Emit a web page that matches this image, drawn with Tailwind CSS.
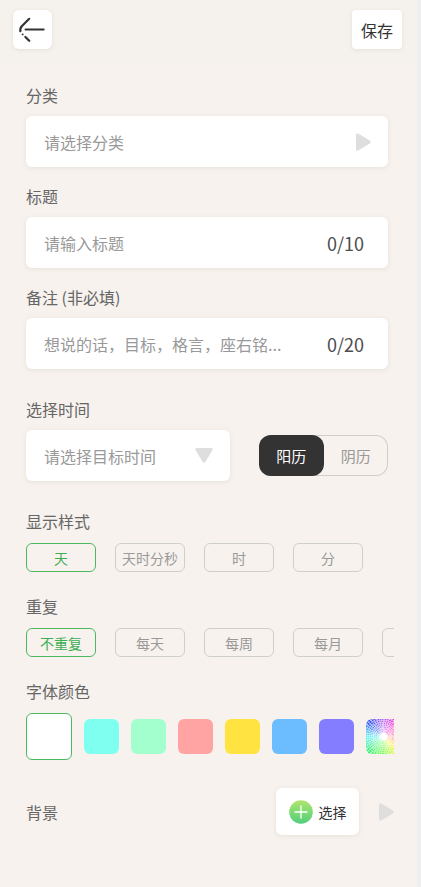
<!DOCTYPE html>
<html lang="zh-CN">
<head>
<meta charset="utf-8">
<meta name="viewport" content="width=device-width, initial-scale=1">
<title>新建目标</title>
<script src="https://cdn.jsdelivr.net/npm/@tailwindcss/browser@4"></script>
</head>
<body class="min-h-screen border-r-4 border-[#efefef] bg-[#f7f2ee] font-['Noto_Sans_CJK_SC',sans-serif] text-base leading-6 text-[#666666]">
<header class="flex items-center justify-between bg-[#f5f1ec] pt-[10px] pr-[15px] pb-4 pl-[13px]">
  <button type="button" aria-label="返回" class="flex size-[39px] items-center justify-center rounded-md bg-white shadow-[0_1px_4px_rgba(120,110,70,0.12)]">
    <svg class="size-[39px]" viewBox="0 0 39 39" fill="none" stroke="#333" stroke-linecap="round" stroke-linejoin="round">
      <path d="M16.2 8.8 9 16Q6.8 18.2 7.4 21.2" stroke-width="2.2"/>
      <path d="M12.5 19.5H30.7" stroke-width="1.9"/>
      <path d="M9.6 24.4h.1" stroke-width="1.9"/>
      <path d="m12.4 27 3.8 3.8" stroke-width="2.3"/>
    </svg>
  </button>
  <button type="submit" form="goal" class="h-[39px] rounded-sm bg-white px-[9px] text-[#333333] shadow-[0_1px_4px_rgba(120,110,70,0.12)]">保存</button>
</header>

<form id="goal" class="pt-[18px] pr-[23px] pb-10 pl-[26px]">
  <div class="mr-[6px] flex flex-col gap-[17px]">
    <div class="flex flex-col gap-[9px]">
      <label for="category">分类</label>
      <div class="flex h-[51px] items-center rounded-md bg-white pr-[17px] pl-[18px] shadow-[0_1px_5px_rgba(120,110,70,0.12)]">
        <select id="category" class="min-w-0 flex-1 appearance-none bg-transparent text-[#999999] outline-none"><option>请选择分类</option></select>
        <svg class="h-[18px] w-[15px]" viewBox="0 0 15 18" fill="#dedede" aria-hidden="true"><path d="M0 2Q0-.8 2.6.7L13.8 7.6Q15.6 9 13.8 10.4L2.6 17.3Q0 18.8 0 16Z"/></svg>
      </div>
    </div>
    <div class="flex flex-col gap-[9px]">
      <label for="title">标题</label>
      <div class="flex h-[51px] items-center gap-4 rounded-md bg-white pr-6 pl-[18px] shadow-[0_1px_5px_rgba(120,110,70,0.12)]">
        <input id="title" type="text" maxlength="10" placeholder="请输入标题" class="min-w-0 flex-1 bg-transparent text-[#333333] outline-none placeholder:text-[#999999]">
        <span class="text-lg text-[#4d4d4d]">0/10</span>
      </div>
    </div>
    <div class="flex flex-col gap-[9px]">
      <label for="note">备注 (非必填)</label>
      <div class="flex h-[51px] items-center gap-4 rounded-md bg-white pr-6 pl-[18px] shadow-[0_1px_5px_rgba(120,110,70,0.12)]">
        <input id="note" type="text" maxlength="20" placeholder="想说的话，目标，格言，座右铭..." class="min-w-0 flex-1 bg-transparent text-[#333333] outline-none placeholder:text-[#999999]">
        <span class="text-lg text-[#4d4d4d]">0/20</span>
      </div>
    </div>
  </div>

  <div class="mt-7 mr-[6px] flex flex-col gap-[9px]">
    <label for="date">选择时间</label>
    <div class="flex items-center gap-[29px]">
      <div class="flex h-[51px] min-w-0 flex-1 items-center rounded-md bg-white pr-[17px] pl-[18px] shadow-[0_1px_5px_rgba(120,110,70,0.12)]">
        <select id="date" class="min-w-0 flex-1 appearance-none bg-transparent text-[#999999] outline-none"><option>请选择目标时间</option></select>
        <svg class="h-[15px] w-[18px]" viewBox="0 0 18 15" fill="#dedede" aria-hidden="true"><path d="M2 0Q-.8 0 .7 2.6L7.6 13.8Q9 15.6 10.4 13.8L17.3 2.6Q18.8 0 16 0Z"/></svg>
      </div>
      <div role="radiogroup" aria-label="历法" class="grid h-[41px] w-[129px] grid-cols-2 rounded-xl text-[15px] text-[#999999] ring-1 ring-[#cfcfca] ring-inset">
        <label class="relative flex items-center justify-center rounded-xl has-checked:bg-[#333333] has-checked:text-white"><input type="radio" name="calendar" checked class="sr-only">阳历</label>
        <label class="relative flex items-center justify-center rounded-xl has-checked:bg-[#333333] has-checked:text-white"><input type="radio" name="calendar" class="sr-only">阴历</label>
      </div>
    </div>
  </div>

  <div role="radiogroup" aria-labelledby="style-label" class="mt-[28px] flex flex-col gap-[10px]">
    <span id="style-label">显示样式</span>
    <div class="flex gap-[19px] overflow-x-auto text-sm text-[#999999] [scrollbar-width:none]">
      <label class="relative flex h-[29px] w-[70px] shrink-0 items-center justify-center rounded-md border border-[#cfcfca] has-checked:border-[#4cb860] has-checked:text-[#3cae52]"><input type="radio" name="style" checked class="sr-only">天</label>
      <label class="relative flex h-[29px] w-[70px] shrink-0 items-center justify-center rounded-md border border-[#cfcfca] has-checked:border-[#4cb860] has-checked:text-[#3cae52]"><input type="radio" name="style" class="sr-only">天时分秒</label>
      <label class="relative flex h-[29px] w-[70px] shrink-0 items-center justify-center rounded-md border border-[#cfcfca] has-checked:border-[#4cb860] has-checked:text-[#3cae52]"><input type="radio" name="style" class="sr-only">时</label>
      <label class="relative flex h-[29px] w-[70px] shrink-0 items-center justify-center rounded-md border border-[#cfcfca] has-checked:border-[#4cb860] has-checked:text-[#3cae52]"><input type="radio" name="style" class="sr-only">分</label>
    </div>
  </div>

  <div role="radiogroup" aria-labelledby="repeat-label" class="mt-[22px] flex flex-col gap-[10px]">
    <span id="repeat-label">重复</span>
    <div class="flex gap-[19px] overflow-x-auto text-sm text-[#999999] [scrollbar-width:none]">
      <label class="relative flex h-[29px] w-[70px] shrink-0 items-center justify-center rounded-md border border-[#cfcfca] has-checked:border-[#4cb860] has-checked:text-[#3cae52]"><input type="radio" name="repeat" checked class="sr-only">不重复</label>
      <label class="relative flex h-[29px] w-[70px] shrink-0 items-center justify-center rounded-md border border-[#cfcfca] has-checked:border-[#4cb860] has-checked:text-[#3cae52]"><input type="radio" name="repeat" class="sr-only">每天</label>
      <label class="relative flex h-[29px] w-[70px] shrink-0 items-center justify-center rounded-md border border-[#cfcfca] has-checked:border-[#4cb860] has-checked:text-[#3cae52]"><input type="radio" name="repeat" class="sr-only">每周</label>
      <label class="relative flex h-[29px] w-[70px] shrink-0 items-center justify-center rounded-md border border-[#cfcfca] has-checked:border-[#4cb860] has-checked:text-[#3cae52]"><input type="radio" name="repeat" class="sr-only">每月</label>
      <label class="relative flex h-[29px] w-[70px] shrink-0 items-center justify-center rounded-md border border-[#cfcfca] has-checked:border-[#4cb860] has-checked:text-[#3cae52]"><input type="radio" name="repeat" aria-label="更多" class="sr-only"></label>
    </div>
  </div>

  <div role="radiogroup" aria-labelledby="color-label" class="mt-[22px] flex flex-col gap-[10px]">
    <span id="color-label">字体颜色</span>
    <div class="flex items-center gap-3 overflow-x-auto [scrollbar-width:none]">
      <input type="radio" name="color" aria-label="白色" checked class="size-[35px] shrink-0 appearance-none rounded-md bg-white checked:h-[47px] checked:w-[46px] checked:border checked:border-[#4cb860]">
      <input type="radio" name="color" aria-label="青色" class="size-[35px] shrink-0 appearance-none rounded-md bg-[#7ffff0]">
      <input type="radio" name="color" aria-label="绿色" class="size-[35px] shrink-0 appearance-none rounded-md bg-[#a4ffcf]">
      <input type="radio" name="color" aria-label="红色" class="size-[35px] shrink-0 appearance-none rounded-md bg-[#ffa4a2]">
      <input type="radio" name="color" aria-label="黄色" class="size-[35px] shrink-0 appearance-none rounded-md bg-[#ffe340]">
      <input type="radio" name="color" aria-label="蓝色" class="size-[35px] shrink-0 appearance-none rounded-md bg-[#6bbdff]">
      <input type="radio" name="color" aria-label="紫色" class="size-[35px] shrink-0 appearance-none rounded-md bg-[#847dff]">
      <input type="radio" name="color" aria-label="自定义颜色" class="size-[35px] shrink-0 appearance-none rounded-md bg-[radial-gradient(circle,#fff_0_3px,rgba(255,255,255,0.6)_5px,rgba(255,255,255,0)_20px),repeating-radial-gradient(circle,rgba(255,255,255,0.35)_0_1px,rgba(255,255,255,0)_1px_2px),repeating-conic-gradient(rgba(255,255,255,0.4)_0_4deg,rgba(255,255,255,0)_4deg_8deg),conic-gradient(#b050f0,#ff30d0_45deg,#ff7090_90deg,#ffee30_135deg,#70ff40_180deg,#30f070_225deg,#40eef0_270deg,#3050f0_315deg,#b050f0)]">
    </div>
  </div>

  <div class="mt-7 flex items-center">
    <span id="bg-label" class="flex-1">背景</span>
    <button type="button" aria-describedby="bg-label" class="flex h-[47px] w-[83px] items-center justify-center gap-[6px] rounded-md bg-white text-sm text-[#333333] shadow-[0_1px_5px_rgba(120,110,70,0.12)]">
      <svg class="size-6" viewBox="0 0 24 24" fill="none" aria-hidden="true">
        <defs><linearGradient id="plus" x1="0" y1="0" x2="0" y2="1"><stop stop-color="#b0e56c"/><stop offset="1" stop-color="#50cf7c"/></linearGradient></defs>
        <circle cx="12" cy="12" r="11.8" fill="url(#plus)"/>
        <path d="M12 6v12M6 12h12" stroke="#fff" stroke-width="1.3" stroke-linecap="round"/>
      </svg>
      选择
    </button>
    <svg class="ml-5 h-[18px] w-[15px]" viewBox="0 0 15 18" fill="#dedede" aria-hidden="true"><path d="M0 2Q0-.8 2.6.7L13.8 7.6Q15.6 9 13.8 10.4L2.6 17.3Q0 18.8 0 16Z"/></svg>
  </div>
</form>
</body>
</html>
